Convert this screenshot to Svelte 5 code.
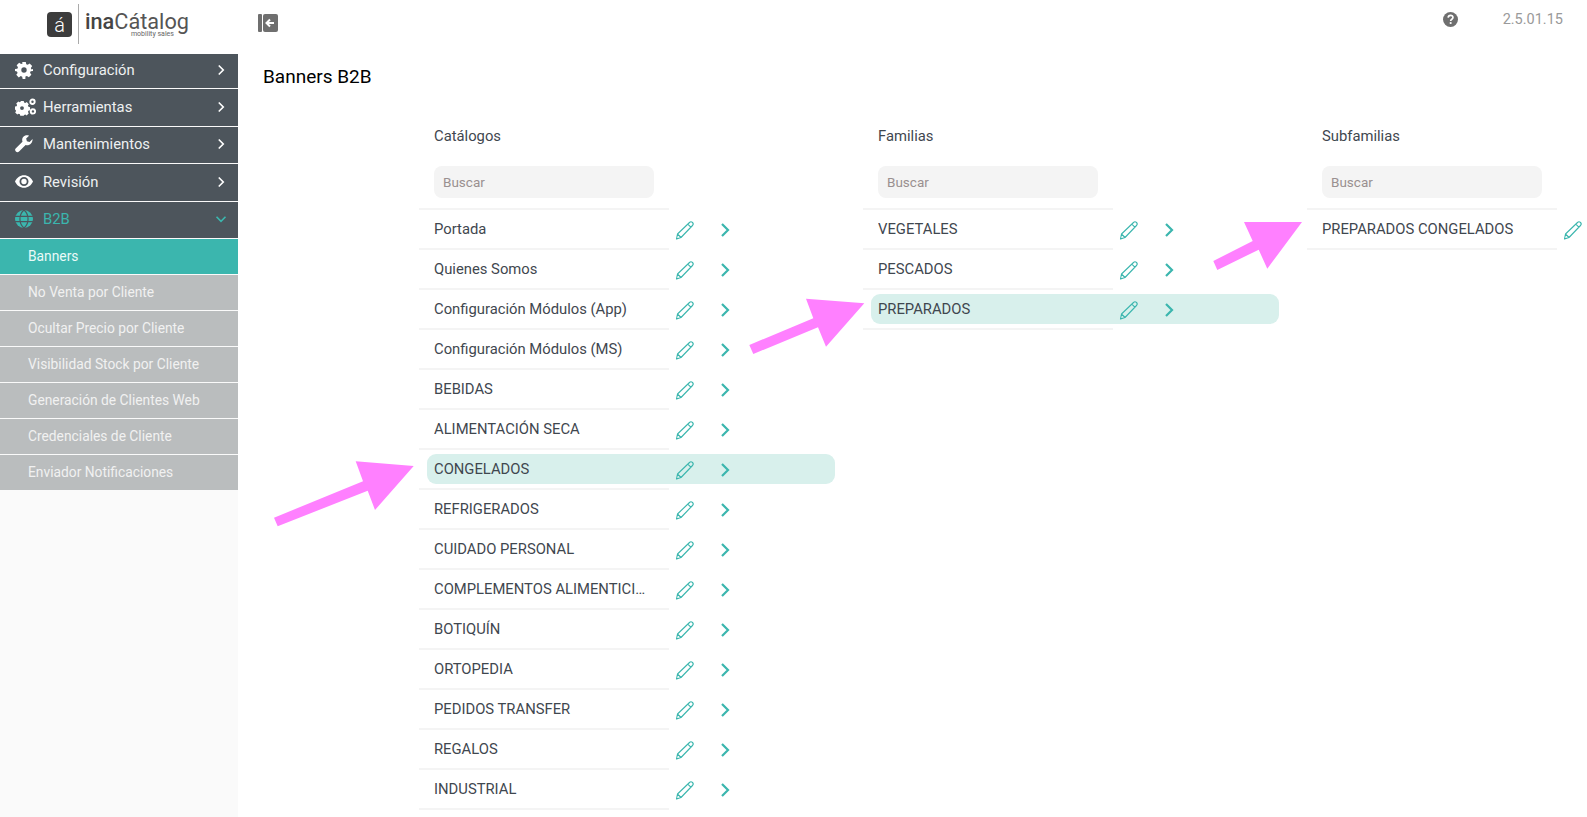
<script lang="ts">
    const menu = [
        { label: "Configuración", icon: "gear" },
        { label: "Herramientas", icon: "gears" },
        { label: "Mantenimientos", icon: "wrench" },
        { label: "Revisión", icon: "eye" },
    ];
    const submenu = [
        "Banners",
        "No Venta por Cliente",
        "Ocultar Precio por Cliente",
        "Visibilidad Stock por Cliente",
        "Generación de Clientes Web",
        "Credenciales de Cliente",
        "Enviador Notificaciones",
    ];
    const columns = [
        {
            title: "Catálogos",
            selected: "CONGELADOS",
            chevron: true,
            items: [
                "Portada",
                "Quienes Somos",
                "Configuración Módulos (App)",
                "Configuración Módulos (MS)",
                "BEBIDAS",
                "ALIMENTACIÓN SECA",
                "CONGELADOS",
                "REFRIGERADOS",
                "CUIDADO PERSONAL",
                "COMPLEMENTOS ALIMENTICIOS",
                "BOTIQUÍN",
                "ORTOPEDIA",
                "PEDIDOS TRANSFER",
                "REGALOS",
                "INDUSTRIAL",
            ],
        },
        {
            title: "Familias",
            selected: "PREPARADOS",
            chevron: true,
            items: ["VEGETALES", "PESCADOS", "PREPARADOS"],
        },
        {
            title: "Subfamilias",
            selected: "",
            chevron: false,
            items: ["PREPARADOS CONGELADOS"],
        },
    ];
</script>

{#snippet chevron(color: string, dir: string)}
    <svg class="chev {dir}" viewBox="0 0 10 16" width="10" height="16">
        <path d="M2 2l6 6-6 6" fill="none" stroke={color} stroke-width="2.2" />
    </svg>
{/snippet}

<div class="page">
    <aside class="sidebar">
        <div class="logo">
            <div class="logo-mark">á</div>
            <div class="logo-rule"></div>
            <div class="logo-name">
                <span class="ina">ina</span><span class="cat">Cátalog</span>
                <span class="tag">mobility sales</span>
            </div>
        </div>
        <nav>
            {#each menu as m}
                <div class="menu-item">
                    <span class="menu-icon">
                        {#if m.icon === "gear"}
                            <svg viewBox="0 0 20 20" width="18" height="18">
                                <path
                                    fill-rule="evenodd"
                                    fill="#fff"
                                    d="M8 1h4l.5 2.6 1.6.7 2.2-1.5 2.8 2.8-1.5 2.2.7 1.6L20 9v2l-2.6.5-.7 1.6 1.5 2.2-2.8 2.8-2.2-1.5-1.6.7L11.5 20h-3L8 17.4l-1.6-.7-2.2 1.5-2.8-2.8 1.5-2.2-.7-1.6L0 11V9l2.6-.5.7-1.6-1.500-2.200 2.800-2.800 2.200 1.500 1.600-.7zM10 7a3 3 0 100 6 3 3 0 000-6z"
                                />
                            </svg>
                        {:else if m.icon === "gears"}
                            <svg viewBox="0 0 24 20" width="21" height="18">
                                <path
                                    fill-rule="evenodd"
                                    fill="#fff"
                                    d="M6 3h4l.4 1.8 1.400.6 1.600-1 2.400 2.400-1 1.600.6 1.400 1.800.4v3.600l-1.800.4-.6 1.400 1 1.600-2.400 2.400-1.600-1-1.400.6L10 20H6l-.4-1.800-1.400-.6-1.600 1L.2 16.200l1-1.600-.6-1.400L0 13V9.400l1.800-.4.6-1.400-1-1.600 2.400-2.400 1.600 1 1.400-.6zM8 9a2.200 2.200 0 100 4.400A2.200 2.200 0 008 9z"
                                />
                                <circle cx="20" cy="4" r="2.500" fill="none" stroke="#fff" stroke-width="2.200" />
                                <circle cx="20.500" cy="15" r="2.500" fill="none" stroke="#fff" stroke-width="2.200" />
                            </svg>
                        {:else if m.icon === "wrench"}
                            <svg viewBox="0 0 20 20" width="18" height="18">
                                <path
                                    fill="#fff"
                                    d="M19.500 4.500l-3.300 3.200-3-.8-.8-3L15.600.7c-2-.9-4.400-.5-6 1.100-1.600 1.500-2 3.700-1.300 5.600L1 14.700a2.500 2.500 0 003.500 3.600l7.300-7.300c1.900.7 4.200.3 5.700-1.300 1.600-1.500 2-3 2-5.200z"
                                />
                            </svg>
                        {:else}
                            <svg viewBox="0 0 20 14" width="18" height="13">
                                <path
                                    fill-rule="evenodd"
                                    fill="#fff"
                                    d="M10 0C5.500 0 1.800 2.800 0 7c1.800 4.200 5.500 7 10 7s8.200-2.800 10-7c-1.800-4.200-5.500-7-10-7zm0 2a5 5 0 110 10 5 5 0 010-10zm0 2a3 3 0 100 6 3 3 0 000-6z"
                                />
                            </svg>
                        {/if}
                    </span>
                    <span class="menu-label">{m.label}</span>
                    {@render chevron("#fff", "small")}
                </div>
            {/each}
            <div class="menu-item open">
                <span class="menu-icon">
                    <svg viewBox="0 0 20 20" width="18" height="18">
                        <circle cx="10" cy="10" r="10" fill="#3bb6ae" />
                        <path
                            d="M0 7h20M0 13h20M10 0c-6 5-6 15 0 20M10 0c6 5 6 15 0 20"
                            fill="none"
                            stroke="#4d555c"
                            stroke-width="1.300"
                        />
                    </svg>
                </span>
                <span class="menu-label">B2B</span>
                {@render chevron("#3bb6ae", "small down")}
            </div>
            {#each submenu as s, i}
                <div class="sub-item" class:active={i === 0}>{s}</div>
            {/each}
        </nav>
    </aside>

    <main class="content">
        <header class="topbar">
            <svg class="collapse" viewBox="0 0 20 18" width="20" height="18">
                <rect x="0" y="0" width="4" height="18" rx="1" fill="#6f6f6f" />
                <rect x="5" y="0" width="15" height="18" rx="2" fill="#6f6f6f" />
                <path d="M16 9H9M12 5.500L8.500 9l3.500 3.500" fill="none" stroke="#fff" stroke-width="2" />
            </svg>
            <div class="topright">
                <svg viewBox="0 0 20 20" width="15" height="15">
                    <circle cx="10" cy="10" r="10" fill="#6f6f6f" />
                    <path
                        d="M6.800 7.500C7 5.500 8.300 4.500 10.100 4.500c1.900 0 3.200 1.100 3.200 2.700 0 2.500-3.100 2.400-3.100 4.800"
                        fill="none"
                        stroke="#fff"
                        stroke-width="2.200"
                    />
                    <rect x="9" y="13.500" width="2.400" height="2.400" fill="#fff" />
                </svg>
                <span class="version">2.5.01.15</span>
            </div>
        </header>
        <h1>Banners B2B</h1>
        <div class="columns">
            {#each columns as col}
                <section class="col">
                    <div class="col-title">{col.title}</div>
                    <input class="search" placeholder="Buscar" />
                    <ul>
                        {#each col.items as item}
                            <li class:selected={item === col.selected}>
                                <span class="name">{item}</span>
                                <svg class="pencil" viewBox="0 0 20 20" width="20" height="20">
                                    <path
                                        d="M1.500 19l1-5L14.500 2.500a2.100 2.100 0 013 3L6 17.500zM2.500 14l3.500 3.500M12.800 4.200l3 3"
                                        fill="none"
                                        stroke="#3bb6ae"
                                        stroke-width="1.100"
                                        stroke-linejoin="round"
                                    />
                                </svg>
                                {#if col.chevron}
                                    <span class="next">{@render chevron("#3bb6ae", "")}</span>
                                {/if}
                            </li>
                        {/each}
                    </ul>
                </section>
            {/each}
        </div>
    </main>

    <svg class="arrows" width="1587" height="817" viewBox="0 0 1587 817">
        <polygon fill="#ff80ff" points="274,517.7 277.7,526.3 367.7,490.7 375,510 413.7,466 355.7,461.3 363,481.3" />
        <polygon fill="#ff80ff" points="749.3,345 753.3,354 818,327.3 826,346.7 864.3,303.3 806,298.7 813.3,318.3" />
        <polygon fill="#ff80ff" points="1213.3,261 1217.3,270 1258.7,249.7 1267.3,268.7 1302,222 1244,222 1252.7,241" />
    </svg>
</div>

<style>
    :global(body) {
        margin: 0;
        background: #fff;
    }

    .page {
        position: relative;
        width: 1587px;
        height: 817px;
        display: flex;
        overflow: hidden;
        font-family: Roboto, "Liberation Sans", sans-serif;
    }

    .sidebar {
        width: 238px;
        flex: none;
        background: #fafafa;
    }

    .logo {
        height: 54px;
        background: #fff;
        display: flex;
        align-items: center;
        padding: 0 0 6px 47px;
        box-sizing: border-box;
    }

    .logo-mark {
        width: 25px;
        height: 25px;
        border-radius: 4px;
        background: #3c3c3c;
        color: #fff;
        font-size: 20px;
        font-weight: 300;
        line-height: 26px;
        text-align: center;
    }

    .logo-rule {
        width: 1px;
        height: 40px;
        background: #aaa;
        margin: 0 6px;
    }

    .logo-name {
        position: relative;
        font-size: 21.7px;
        line-height: 28px;
        color: #444;
        margin-top: -4px;
    }

    .ina {
        font-weight: 500;
    }

    .cat {
        color: #555;
    }

    .tag {
        position: absolute;
        right: 15px;
        bottom: -2px;
        font-size: 7px;
        line-height: 8px;
        color: #666;
    }

    .menu-item {
        height: 36.5px;
        margin-bottom: 1px;
        padding-bottom: 1px;
        box-sizing: border-box;
        background: #4d555c;
        color: #fff;
        display: flex;
        align-items: center;
        font-size: 14.8px;
    }

    .menu-item:first-child {
        height: 34px;
        padding-bottom: 3px;
    }

    .menu-icon {
        width: 43px;
        padding-left: 15px;
        box-sizing: border-box;
        display: flex;
        align-items: center;
        flex: none;
    }

    .menu-label {
        flex: 1;
        color: #eef0f1;
    }

    .open .menu-label {
        color: #3bb6ae;
    }

    .chev.small {
        width: 8px;
        height: 12px;
        margin-right: 13px;
    }

    .chev.down {
        transform: rotate(90deg);
    }

    .sub-item {
        height: 35px;
        margin-bottom: 1px;
        padding-left: 28px;
        background: #babdbe;
        color: #f1f1f1;
        font-size: 13.8px;
        line-height: 35px;
    }

    .sub-item.active {
        background: #3bb6ae;
        color: #eafaf8;
    }

    .content {
        flex: 1;
        min-width: 0;
    }

    .topbar {
        height: 54px;
        display: flex;
        justify-content: space-between;
        padding: 14px 24px 0 20px;
        box-sizing: border-box;
    }

    .topright {
        display: flex;
        gap: 45px;
        height: 18px;
        margin-top: -4px;
        align-items: center;
    }

    .version {
        color: #9a9a9a;
        font-size: 14.5px;
    }

    h1 {
        margin: 12px 0 0 25px;
        font-size: 19px;
        line-height: 22px;
        font-weight: 400;
        color: #000;
    }

    .columns {
        display: flex;
        margin: 37px 0 0 181px;
        gap: 194px;
    }

    .col {
        width: 250px;
        flex: none;
        color: #3f474f;
        font-size: 14.8px;
    }

    .col-title {
        padding-left: 15px;
        line-height: 22px;
    }

    .search {
        display: block;
        margin: 19px 0 10px 15px;
        width: 220px;
        height: 32px;
        box-sizing: border-box;
        border: 0;
        border-radius: 8px;
        background: #f4f4f4;
        padding: 0 9px;
        font: 13.5px Roboto, sans-serif;
    }

    .search::placeholder {
        color: #9a9090;
    }

    ul {
        list-style: none;
        margin: 0;
        padding: 0;
        border-top: 2px solid #f4f4f4;
    }

    li {
        position: relative;
        height: 38px;
        border-bottom: 2px solid #f4f4f4;
        display: flex;
        align-items: center;
        padding-left: 15px;
    }

    li.selected::before {
        content: "";
        position: absolute;
        left: 8px;
        top: 4px;
        width: 408px;
        height: 30px;
        border-radius: 9px;
        background: #d8f0ec;
    }

    .name {
        position: relative;
        width: 216px;
        white-space: nowrap;
        overflow: hidden;
        text-overflow: ellipsis;
    }

    .pencil {
        position: absolute;
        left: 256px;
        top: 10px;
    }

    .next {
        position: absolute;
        left: 301px;
        top: 12px;
        line-height: 0;
    }

    .arrows {
        position: absolute;
        inset: 0;
        pointer-events: none;
    }
</style>
